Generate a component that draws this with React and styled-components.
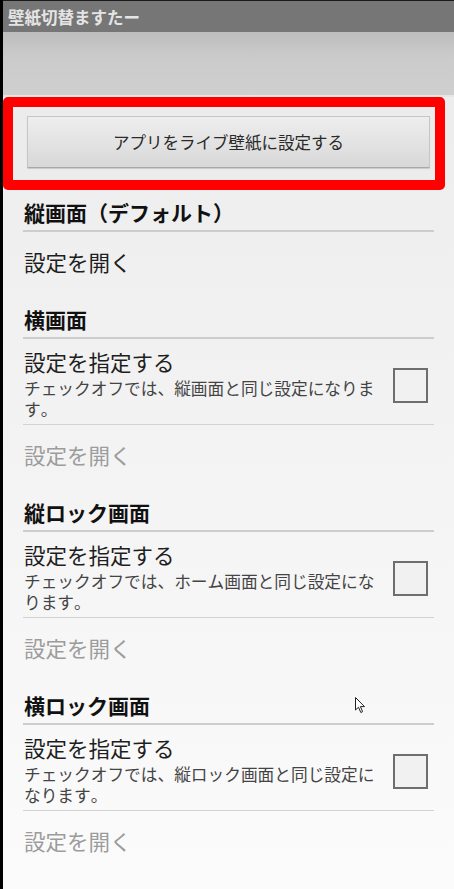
import React from 'react';
import styled, { createGlobalStyle } from 'styled-components';

const GlobalStyle = createGlobalStyle`
  html, body {
    margin: 0;
    padding: 0;
    background: #000;
  }
  body {
    font-family: "Noto Sans CJK JP", "Noto Sans", sans-serif;
    font-kerning: none;
  }
`;

const Screen = styled.div`
  position: relative;
  margin-left: 3px;
  width: 451px;
  height: 889px;
  overflow: hidden;
  display: flex;
  flex-direction: column;
  background: linear-gradient(180deg, #ebebeb 0%, #f3f3f3 50%, #fbfbfb 100%);
`;

const TitleBar = styled.div`
  height: 32px;
  flex-shrink: 0;
  background: #767676;
  border-top: 1px solid #1a1a1a;
  box-sizing: border-box;
  display: flex;
  align-items: center;
  padding-left: 5px;
  color: #e4e4e4;
  font-size: 16.5px;
  font-weight: 700;
`;

const ActionArea = styled.div`
  height: 63px;
  flex-shrink: 0;
  background: linear-gradient(180deg, #bdbdbd 0%, #cbcbcb 40%, #cfcfcf 100%);
  border-bottom: 2px solid #e6e6e6;
`;

const Highlight = styled.div`
  width: 442px;
  box-sizing: border-box;
  border: 10px solid #ff0000;
  border-radius: 5px;
  background: #ececec;
  padding: 9px 5px 12px 14px;
  flex-shrink: 0;
`;

const WallpaperButton = styled.button`
  display: block;
  width: 403px;
  height: 52px;
  border: 1px solid #c6c6c6;
  border-bottom-color: #a8a8a8;
  border-radius: 1px;
  background: linear-gradient(180deg, #eeeeee 0%, #e2e2e2 55%, #d8d8d8 100%);
  box-shadow: 0 1px 1px rgba(0, 0, 0, 0.15);
  font-family: inherit;
  font-size: 16.5px;
  color: #2a2a2a;
  padding: 0;
`;

const List = styled.div`
  padding: 0 20px 0 20px;
`;

const Category = styled.div`
  padding-top: ${p => (p.first ? '10px' : '14px')};
  padding-bottom: 6px;
  border-bottom: 2px solid #cdcdcd;
  font-size: 21px;
  line-height: 24px;
  font-weight: 700;
  color: #111;
  padding-left: 1px;
`;

const OpenItem = styled.div`
  padding: 18px 0 19px 1px;
  font-size: 21.5px;
  line-height: 24px;
  color: ${p => (p.disabled ? '#9c9c9c' : '#1e1e1e')};
`;

const CheckRow = styled.div`
  display: flex;
  align-items: center;
  padding: 11px 0 4px 1px;
  border-bottom: 1px solid #d2d2d2;
`;

const CheckText = styled.div`
  flex: 1;
  min-width: 0;
`;

const CheckTitle = styled.div`
  font-size: 21.5px;
  line-height: 24px;
  color: #1e1e1e;
`;

const CheckSummary = styled.div`
  margin-top: 4px;
  font-size: 16.7px;
  line-height: 21px;
  color: #444;
`;

const CheckBox = styled.div`
  width: 35px;
  height: 35px;
  box-sizing: border-box;
  border: 2px solid #6e6e6e;
  background: #f1f1f1;
  margin: 0 6px 0 15px;
  flex-shrink: 0;
`;

const Cursor = styled.svg`
  position: absolute;
  left: 352px;
  top: 697px;
`;

const sections = [
  { title: '縦ロック画面', summary: 'チェックオフでは、ホーム画面と同じ設定になります。' },
  { title: '横ロック画面', summary: 'チェックオフでは、縦ロック画面と同じ設定になります。' },
];

const CheckSection = ({ title, summary }) => (
  <>
    <Category>{title}</Category>
    <CheckRow>
      <CheckText>
        <CheckTitle>設定を指定する</CheckTitle>
        <CheckSummary>{summary}</CheckSummary>
      </CheckText>
      <CheckBox />
    </CheckRow>
    <OpenItem disabled>設定を開く</OpenItem>
  </>
);

export default function App() {
  return (
    <>
      <GlobalStyle />
      <Screen>
        <TitleBar>壁紙切替ますたー</TitleBar>
        <ActionArea />
        <Highlight>
          <WallpaperButton>アプリをライブ壁紙に設定する</WallpaperButton>
        </Highlight>
        <List>
          <Category first>縦画面（デフォルト）</Category>
          <OpenItem>設定を開く</OpenItem>
          <CheckSection title="横画面" summary="チェックオフでは、縦画面と同じ設定になります。" />
          {sections.map(s => (
            <CheckSection key={s.title} title={s.title} summary={s.summary} />
          ))}
        </List>
        <Cursor width="12" height="17" viewBox="0 0 12 17">
          <path d="M0.5 0.5 L0.5 13 L3.5 10.2 L5.8 15.5 L7.6 14.7 L5.4 9.6 L9.5 9.6 Z" fill="#fff" stroke="#222" strokeWidth="1" strokeLinejoin="round" />
        </Cursor>
      </Screen>
    </>
  );
}
